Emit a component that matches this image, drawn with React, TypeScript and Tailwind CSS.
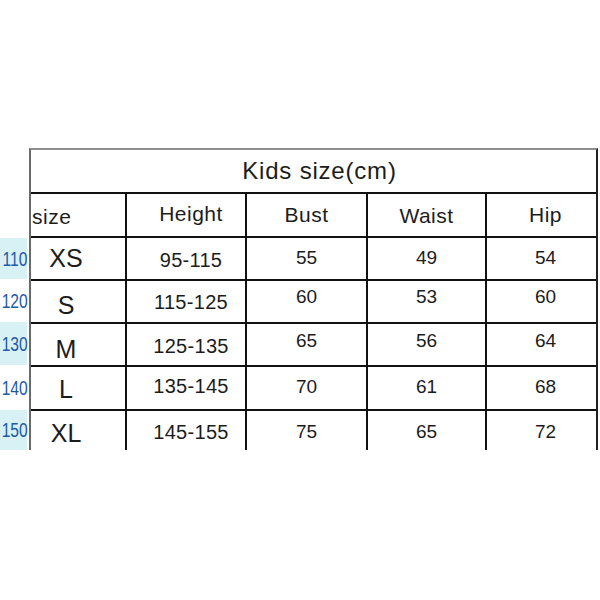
import React from "react";

type Row = {
  label: string;
  cyan: boolean;
  bandH: string;
  h: string;
  size: string;
  height: string;
  bust: string;
  waist: string;
  hip: string;
  sizeCls: string;
  heightCls: string;
  valCls: string;
  last?: boolean;
};

const rows: Row[] = [
  { label: "110", cyan: true, bandH: "h-[41px]", h: "h-[43px]", size: "XS", height: "95-115", bust: "55", waist: "49", hip: "54", sizeCls: "pt-0", heightCls: "pt-[3px]", valCls: "pb-[3px]" },
  { label: "120", cyan: false, bandH: "h-[43px]", h: "h-[43px]", size: "S", height: "115-125", bust: "60", waist: "53", hip: "60", sizeCls: "pt-[7px]", heightCls: "pt-0", valCls: "pb-[10px]" },
  { label: "130", cyan: true, bandH: "h-[43px]", h: "h-[43px]", size: "M", height: "125-135", bust: "65", waist: "56", hip: "64", sizeCls: "pt-[9px]", heightCls: "pt-[3px]", valCls: "pb-[9px]" },
  { label: "140", cyan: false, bandH: "h-[45px]", h: "h-[44px]", size: "L", height: "135-145", bust: "70", waist: "61", hip: "68", sizeCls: "pt-[2px]", heightCls: "pb-[4px]", valCls: "pb-[4px]" },
  { label: "150", cyan: true, bandH: "h-[40px]", h: "h-[39px]", size: "XL", height: "145-155", bust: "75", waist: "65", hip: "72", sizeCls: "pt-[5px]", heightCls: "pt-[3px]", valCls: "pt-[1px]", last: true },
];

export default function App() {
  return (
    <div
      className="w-[600px] h-[600px] bg-white overflow-hidden text-[#1c1c1c] leading-none"
      style={{ fontFamily: '"Liberation Sans", Arial, sans-serif' }}
    >
      <div className="flex pt-[148px]">
        {/* left label column */}
        <div className="w-[29px] flex flex-col">
          <div className="h-[90px]" />
          {rows.map((r) => (
            <div
              key={r.label}
              className={`${r.bandH} w-[27px] flex items-center justify-center pl-[3px] ${r.cyan ? "bg-[#d8f1f4]" : "bg-white"}`}
            >
              <span className="inline-block scale-x-[0.78] text-[20px] leading-none text-[#1f5aa6]">
                {r.label}
              </span>
            </div>
          ))}
        </div>

        {/* table */}
        <div className="w-[569px] border-t-2 border-t-[#8e8e8e] border-l-2 border-l-[#6a6a6a] border-r-2 border-r-[#222]">
          <div className="h-[44px] border-b-2 border-[#111] flex items-center justify-center pl-[12px] text-[24px] tracking-[0.8px]">
            Kids size(cm)
          </div>
          <div className="grid grid-cols-[96px_120px_121px_119px_109px] h-[44px] text-[21px] tracking-[0.5px]">
            <div className="border-b-2 border-r-2 border-[#111] flex items-center justify-start pl-[1px] pt-[2px]">size</div>
            <div className="border-b-2 border-r-2 border-[#111] flex items-center justify-center pl-[10px] pb-[3px]">Height</div>
            <div className="border-b-2 border-r-2 border-[#111] flex items-center justify-center pb-[1px]">Bust</div>
            <div className="border-b-2 border-r-2 border-[#111] flex items-center justify-center">Waist</div>
            <div className="border-b-2 border-[#111] flex items-center justify-center pl-[8px] pb-[2px]">Hip</div>
          </div>
          {rows.map((r) => {
            const b = r.last ? "" : "border-b-2";
            return (
              <div key={r.label} className={`grid grid-cols-[96px_120px_121px_119px_109px] ${r.h}`}>
                <div className={`${b} border-r-2 border-[#111] flex items-center justify-center pr-[24px] text-[25px] ${r.sizeCls}`}>
                  {r.size}
                </div>
                <div className={`${b} border-r-2 border-[#111] flex items-center justify-center pl-[10px] text-[20px] tracking-[0.3px] ${r.heightCls}`}>
                  {r.height}
                </div>
                <div className={`${b} border-r-2 border-[#111] flex items-center justify-center text-[19px] ${r.valCls}`}>
                  {r.bust}
                </div>
                <div className={`${b} border-r-2 border-[#111] flex items-center justify-center text-[19px] ${r.valCls}`}>
                  {r.waist}
                </div>
                <div className={`${b} border-[#111] flex items-center justify-center pl-[8px] text-[19px] ${r.valCls}`}>
                  {r.hip}
                </div>
              </div>
            );
          })}
        </div>
      </div>
    </div>
  );
}
